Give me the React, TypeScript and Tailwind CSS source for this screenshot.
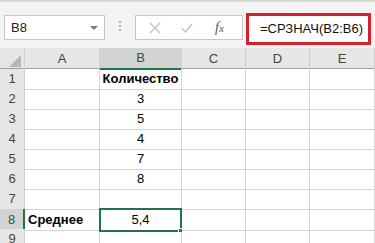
import { type FC } from "react";

const cols = ["A", "B", "C", "D", "E"];
const rows: { n: number; a?: string; b?: string }[] = [
  { n: 1, b: "Количество" },
  { n: 2, b: "3" },
  { n: 3, b: "5" },
  { n: 4, b: "4" },
  { n: 5, b: "7" },
  { n: 6, b: "8" },
  { n: 7 },
  { n: 8, a: "Среднее", b: "5,4" },
  { n: 9 },
];

const grid = "grid grid-cols-[25px_75px_82px_64px_64px_65px]";

const FormulaBar: FC = () => (
  <div className="flex h-[48px] items-start border-t-2 border-[#d6d6d6] bg-[#f3f3f3] pt-[11px]">
    <div className="ml-[4px] mt-[2px] flex h-[25px] w-[101px] items-center justify-between border border-[#c6c6c6] bg-white pl-[6px] pr-[6px] text-[13px] text-[#222]">
      <span>B8</span>
      <span className="h-0 w-0 border-x-[4px] border-t-[4px] border-x-transparent border-t-[#7a7a7a]" />
    </div>
    <div className="ml-[14px] mt-[8px] flex flex-col gap-[2px]">
      <span className="h-[2px] w-[2px] bg-[#b0b0b0]" />
      <span className="h-[2px] w-[2px] bg-[#b0b0b0]" />
      <span className="h-[2px] w-[2px] bg-[#b0b0b0]" />
    </div>
    <div className="ml-[14px] mt-[2px] flex h-[25px] w-[108px] items-center border border-[#c6c6c6] bg-white">
      <svg width="12" height="12" viewBox="0 0 12 12" className="ml-[13px]">
        <path d="M1 1 L11 11 M11 1 L1 11" stroke="#c2c2c2" strokeWidth="1.4" />
      </svg>
      <svg width="12" height="12" viewBox="0 0 12 12" className="ml-[20px]">
        <path d="M1 6.5 L4.5 10 L11 2" stroke="#c2c2c2" strokeWidth="1.4" fill="none" />
      </svg>
      <span className="ml-[22px] font-['Liberation_Serif',serif] text-[14px] italic text-[#555]">
        f<span className="text-[11px]">x</span>
      </span>
    </div>
    <div className="ml-[3px] flex h-[32px] w-[125px] items-center whitespace-nowrap border-[3px] border-[#d7202a] bg-white pl-[11px] text-[13px] text-[#111]">
      =СРЗНАЧ(B2:B6)
    </div>
  </div>
);

const App: FC = () => (
  <div className="h-[243px] w-[375px] overflow-hidden bg-white font-['Liberation_Sans',Arial,sans-serif]">
    <FormulaBar />
    <div className={`${grid} h-[21px] border-b border-[#9e9e9e] bg-[#e6e6e6] text-[13px] text-[#444]`}>
      <div className="relative border-r border-[#cfcfcf]">
        <span className="absolute bottom-[3px] right-[3px] h-0 w-0 border-b-[12px] border-l-[12px] border-b-[#b6b6b6] border-l-transparent" />
      </div>
      {cols.map((c) => (
        <div
          key={c}
          className={
            c === "B"
              ? "flex items-center justify-center border-b-2 border-r border-b-[#217346] border-r-[#cfcfcf] bg-[#d3d3d3] text-[#1f5c38]"
              : "flex items-center justify-center border-r border-[#cfcfcf]"
          }
        >
          {c}
        </div>
      ))}
    </div>
    {rows.map((r) => (
      <div key={r.n} className={`${grid} h-[20px] text-[13px] text-black`}>
        <div
          className={
            r.n === 8
              ? "flex items-center justify-center border-b border-r-2 border-b-[#cfcfcf] border-r-[#217346] bg-[#d3d3d3] text-[13px] text-[#1f5c38]"
              : "flex items-center justify-center border-b border-r border-[#cfcfcf] bg-[#e6e6e6] text-[13px] text-[#444]"
          }
        >
          {r.n}
        </div>
        <div className="flex items-center border-b border-r border-[#d4d4d4] pl-[3px] font-bold">{r.a}</div>
        <div
          className={
            r.n === 8
              ? "relative -my-[1px] -ml-[1px] flex items-center justify-center border-2 border-[#217346]"
              : `flex items-center justify-center border-b border-r border-[#d4d4d4] ${r.n === 1 ? "font-bold" : ""}`
          }
        >
          {r.b}
          {r.n === 8 && (
            <span className="absolute -bottom-[3px] -right-[3px] h-[5px] w-[5px] border border-white bg-[#217346]" />
          )}
        </div>
        <div className="border-b border-r border-[#d4d4d4]" />
        <div className="border-b border-r border-[#d4d4d4]" />
        <div className="border-b border-r border-[#d4d4d4]" />
      </div>
    ))}
  </div>
);

export default App;
